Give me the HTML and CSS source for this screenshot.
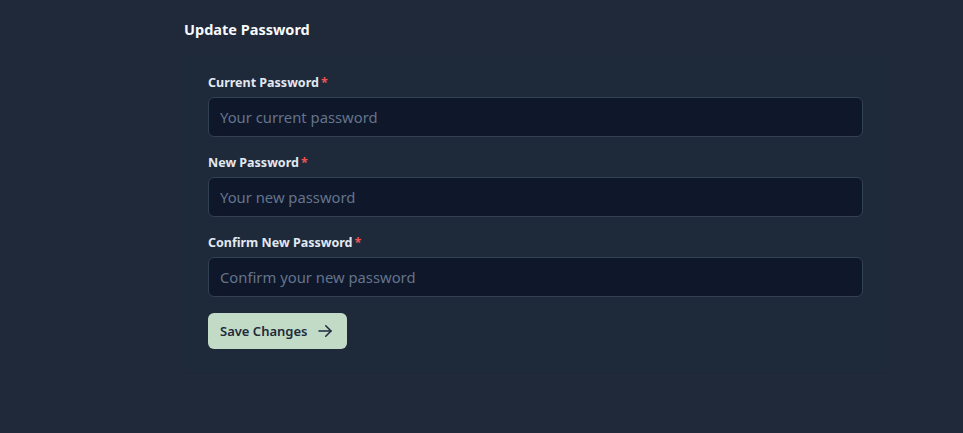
FILE: index.html
```html
<!DOCTYPE html>
<html>
<head>
<meta charset="utf-8">
<link rel="stylesheet" href="styles.css">
</head>
<body>
<main class="page">
  <h2 class="title">Update Password</h2>
  <section class="card">
    <form class="form">
      <div class="field">
        <label class="label">Current Password<span class="req">*</span></label>
        <input class="input" type="password" placeholder="Your current password">
      </div>
      <div class="field">
        <label class="label">New Password<span class="req">*</span></label>
        <input class="input" type="password" placeholder="Your new password">
      </div>
      <div class="field">
        <label class="label">Confirm New Password<span class="req">*</span></label>
        <input class="input" type="password" placeholder="Confirm your new password">
      </div>
      <div class="actions">
        <button class="btn" type="button">Save Changes
          <svg class="arrow" width="18" height="18" viewBox="0 0 24 24" fill="none" stroke="currentColor" stroke-width="2" stroke-linecap="round" stroke-linejoin="round"><path d="M4 12h16"/><path d="M13 5l7 7-7 7"/></svg>
        </button>
      </div>
    </form>
  </section>
</main>
</body>
</html>
```
FILE: styles.css
```css
* { box-sizing: border-box; }
html, body { margin: 0; padding: 0; }
body {
  background: #1f293a;
  font-family: "Noto Sans", "Open Sans", sans-serif;
  width: 963px;
  height: 433px;
  overflow: hidden;
}
.page {
  padding: 19px 76px 0 184px;
}
.title {
  margin: 0;
  font-size: 14.5px;
  font-weight: 700;
  color: #f8fafc;
  line-height: 20px;
}
.card {
  margin-top: 16px;
  padding: 19px 24px 23px 24px;
  background: #1e293a;
  box-shadow: 0 1px 2px rgba(0,0,0,0.05);
}
.form {
  display: flex;
  flex-direction: column;
  gap: 17px;
}
.field {
  display: flex;
  flex-direction: column;
  gap: 5px;
}
.label {
  font-size: 12.5px;
  font-weight: 700;
  color: #e2e8f0;
  line-height: 18px;
}
.req { color: #f05252; margin-left: 2px; }
.input {
  height: 40px;
  width: 100%;
  background: #0f172a;
  border: 1px solid #334155;
  border-radius: 6px;
  padding: 0 11px;
  font-family: inherit;
  font-size: 14.8px;
  color: #e2e8f0;
  outline: none;
}
.input::placeholder { color: #64748b; }
.actions { display: flex; margin-top: -1px; }
.btn {
  height: 36px;
  display: inline-flex;
  align-items: center;
  gap: 8px;
  padding: 0 13px 0 12px;
  background: #c1dbc6;
  color: #1e293b;
  border: none;
  border-radius: 6px;
  font-family: inherit;
  font-size: 13px;
  font-weight: 600;
}
.arrow { display: block; }
```
